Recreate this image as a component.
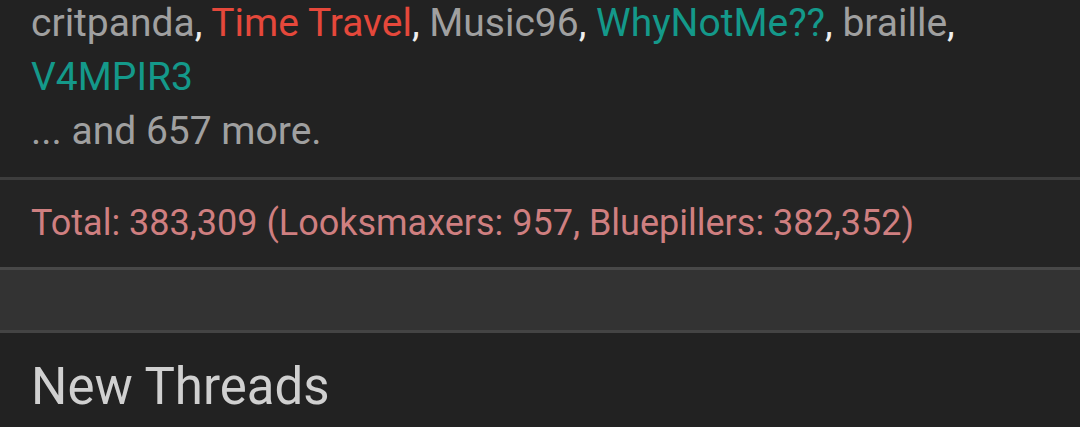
export default function App() {
  const font = { fontFamily: "Roboto, 'Noto Sans', sans-serif" };
  return (
    <div className="w-[1080px] h-[427px] overflow-hidden bg-[#222222]" style={font}>
      <div className="px-[31px] pb-[19px] -mt-[4px] text-[39px] leading-[54px] text-[#a0a0a0]">
        <div>
          <span>critpanda</span>
          <span className="text-[#eeeeee]">, </span>
          <span className="text-[#e5483b]">Time Travel</span>
          <span className="text-[#eeeeee]">, </span>
          <span>Music96</span>
          <span className="text-[#eeeeee]">, </span>
          <span className="text-[#14998a]">WhyNotMe??</span>
          <span className="text-[#eeeeee]">, </span>
          <span>braille</span>
          <span className="text-[#eeeeee]">, </span>
          <br />
          <span className="text-[#14998a]">V4MPIR3</span>
        </div>
        <div>... and 657 more.</div>
      </div>
      <div className="h-[3px] bg-[#3d3d3d]" />
      <div className="bg-[#242424] px-[31px] pt-[16px] pb-[17px] text-[36px] leading-[54px] text-[#cf7f80]">
        Total: 383,309 (Looksmaxers: 957, Bluepillers: 382,352)
      </div>
      <div className="h-[3px] bg-[#484848]" />
      <div className="h-[60px] bg-[#333333]" />
      <div className="h-[3px] bg-[#444444]" />
      <div className="px-[31px] pt-[24px] text-[51px] leading-[60px] text-[#d0d0d0]">New Threads</div>
    </div>
  );
}
